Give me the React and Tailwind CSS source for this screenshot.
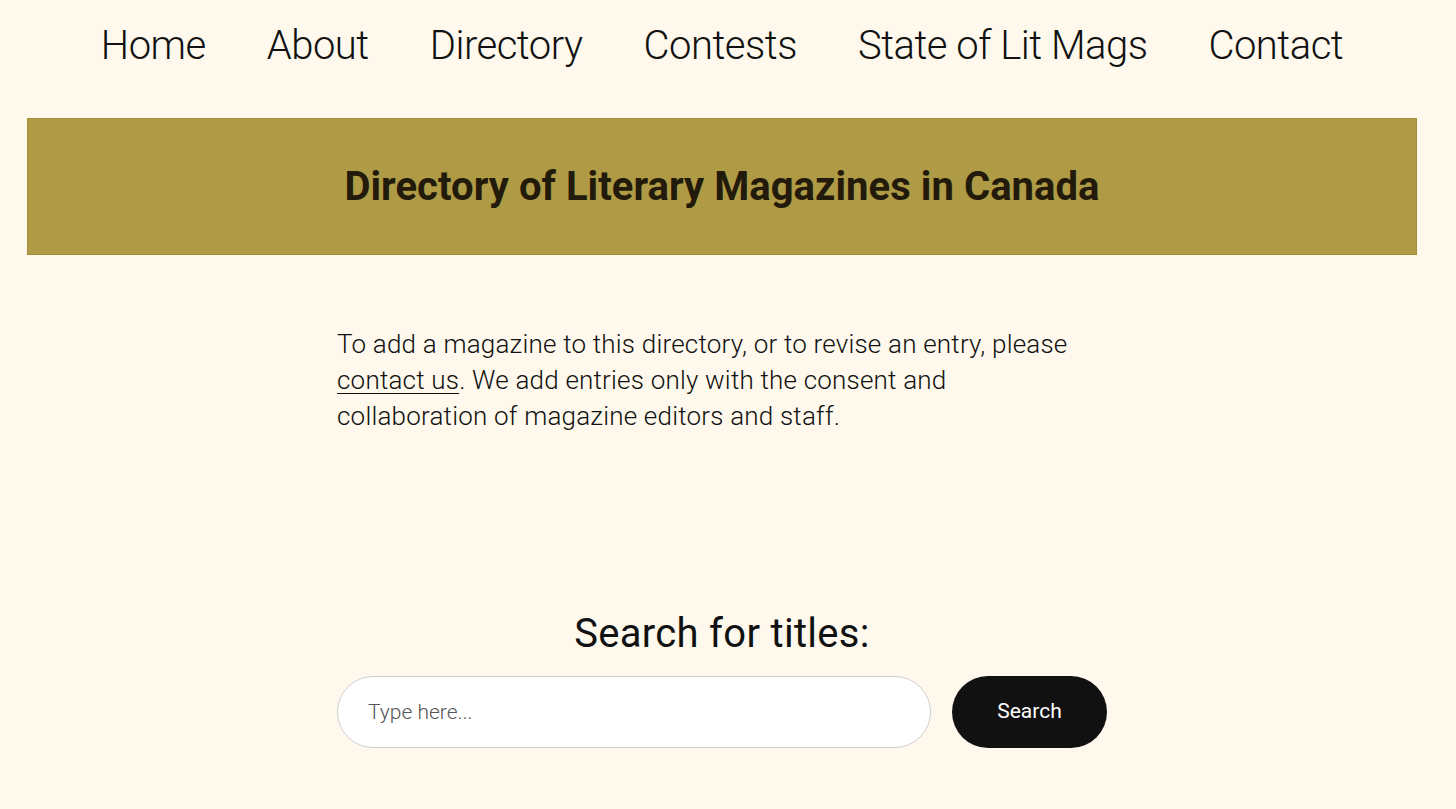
import React from 'react';

const navItems = ['Home', 'About', 'Directory', 'Contests', 'State of Lit Mags', 'Contact'];

export default function App() {
  return (
    <div className="min-h-screen bg-[#fef9ec] text-[#111] font-['Roboto',sans-serif] pr-[12px]">
      <nav className="h-[90px] flex justify-center items-center gap-[61px] pt-[2px]">
        {navItems.map((item) => (
          <a key={item} href="#" className="text-[40px] font-light tracking-[-0.5px] leading-none text-[#111]">
            {item}
          </a>
        ))}
      </nav>

      <div className="mx-[27px] mt-[28px] h-[137px] bg-[#af9a45] border border-[#a38d38] flex items-center justify-center">
        <h1 className="text-[40px] font-bold text-[#221a0a] tracking-[0.05px] leading-none">Directory of Literary Magazines in Canada</h1>
      </div>

      <div className="w-[770px] mx-auto mt-[71px]">
        <p className="text-[26px] font-light leading-[36px] tracking-[0.2px]">
          To add a magazine to this directory, or to revise an entry, please
          <br />
          <a href="#" className="underline underline-offset-4 decoration-1">contact us</a>. We add entries only with the consent and
          <br />
          collaboration of magazine editors and staff.
        </p>

        <h2 className="mt-[180px] text-center text-[40px] font-normal tracking-[0.3px] leading-none">Search for titles:</h2>

        <form className="mt-[22px] flex gap-[21px]" onSubmit={(e) => e.preventDefault()}>
          <input
            type="text"
            placeholder="Type here..."
            className="w-[594px] h-[72px] rounded-full bg-white border border-[#cfcfcf] px-[30px] text-[21px] font-light placeholder:text-[#555] outline-none"
          />
          <button className="w-[155px] h-[72px] rounded-full bg-[#111] text-white text-[21px]">Search</button>
        </form>
      </div>
    </div>
  );
}
